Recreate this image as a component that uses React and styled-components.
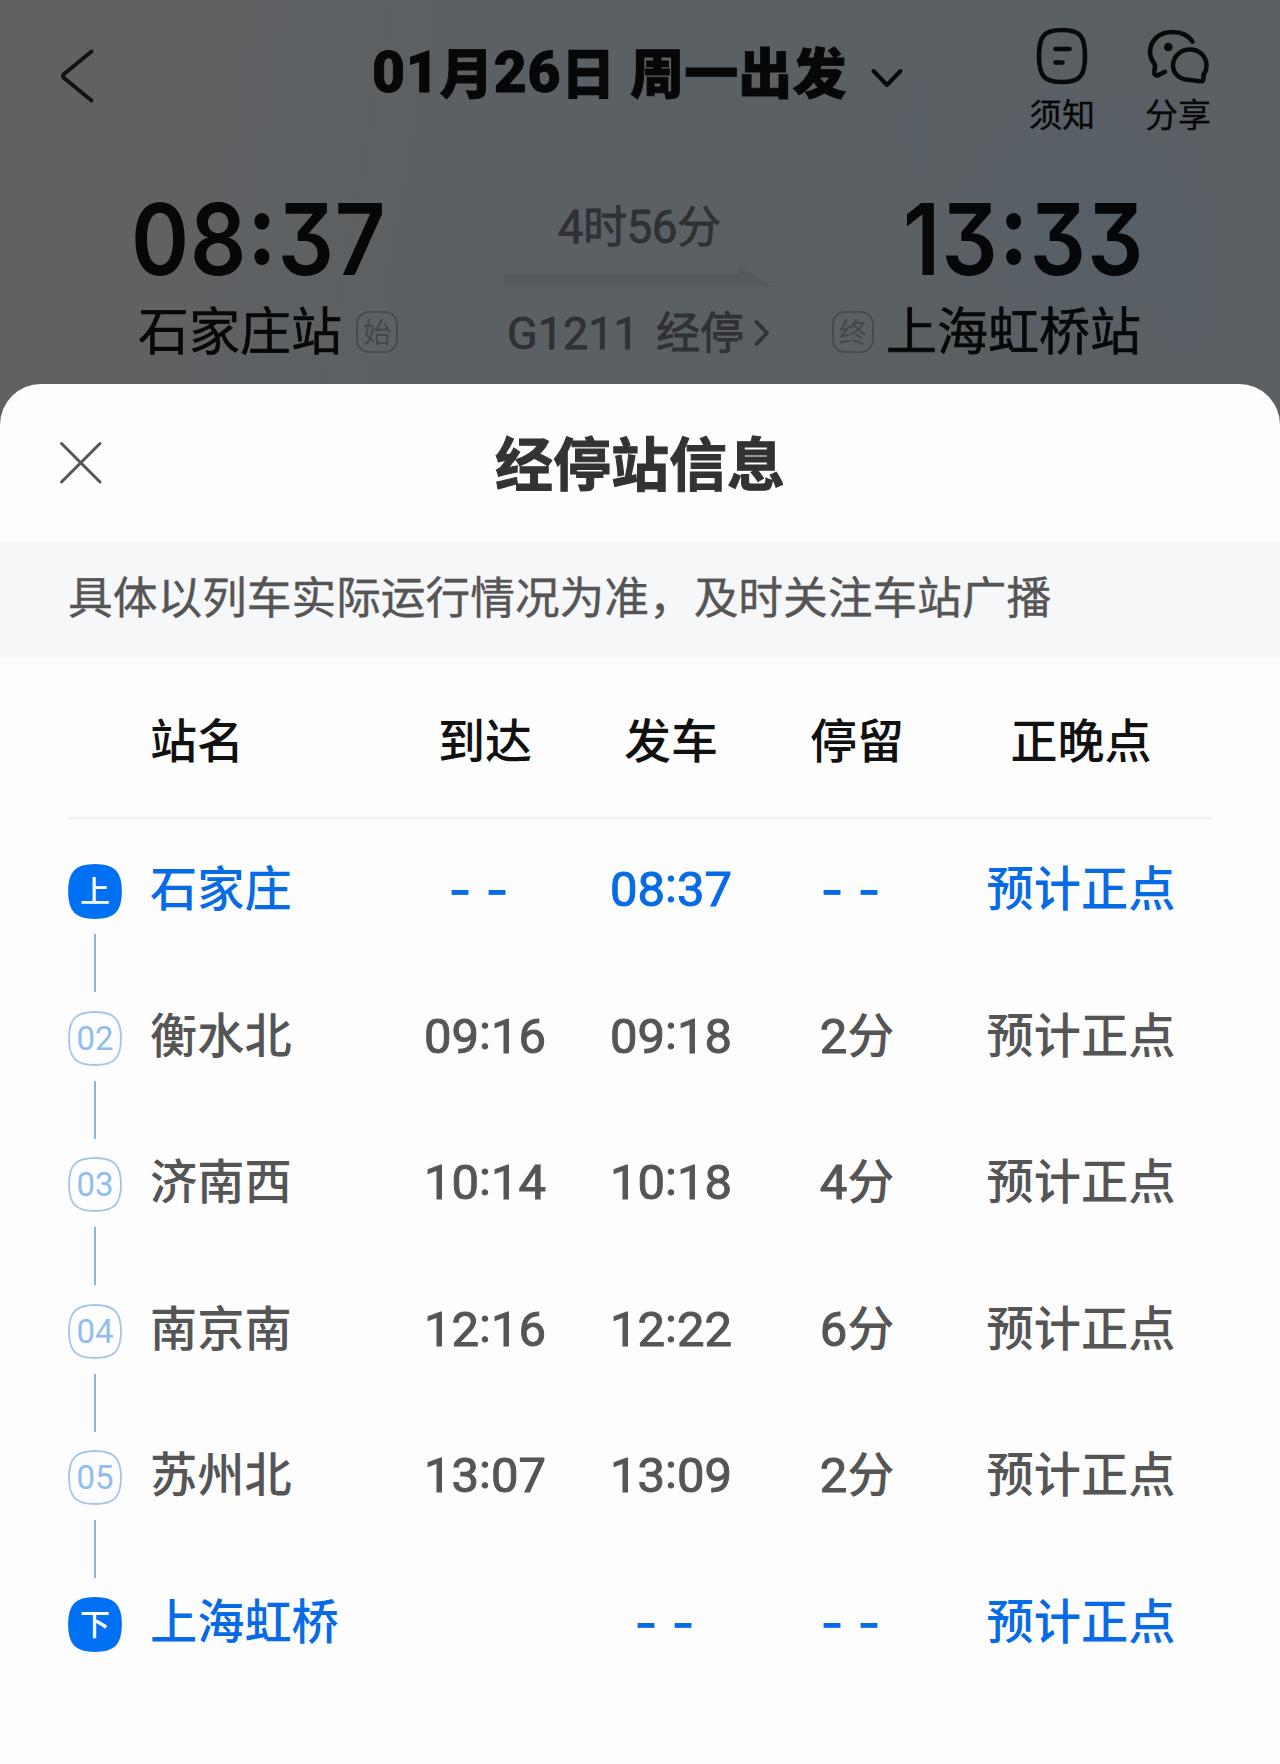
import React from "react";
import styled, { createGlobalStyle, css } from "styled-components";

const CJK = `"Noto Sans CJK SC", sans-serif`;

const GlobalStyle = createGlobalStyle`
  * { box-sizing: border-box; }
  body { margin: 0; background: #606162; font-family: ${CJK}; }
`;

const Screen = styled.div`
  width: 1280px;
  height: 1764px;
  overflow: hidden;
  display: flex;
  flex-direction: column;
`;

const Backdrop = styled.div`
  flex: none;
  height: 430px;
  color: #060708;
  background:
    radial-gradient(ellipse 30px 80px at 920px 130px, rgba(84, 94, 108, 0.45), transparent),
    radial-gradient(ellipse 60px 120px at 1190px 305px, rgba(84, 94, 108, 0.4), transparent),
    radial-gradient(ellipse 170px 160px at 1090px 210px, rgba(86, 95, 105, 0.65) 40%, transparent),
    linear-gradient(100deg, #616162 0%, #5f6163 16%, #5b6064 42%, #5a5f62 85%, #5d6063 100%);
`;

const TopBar = styled.div`
  height: 150px;
  display: grid;
  grid-template-columns: 372px 1fr 276px;
  align-items: start;
`;

const BackButton = styled.div`
  padding: 47px 0 0 58px;
`;

const DateTitle = styled.div`
  height: 150px;
  padding-top: 44px;
  display: flex;
  white-space: pre;
  font-size: 54px;
  font-weight: 900;
  line-height: 53px;
  letter-spacing: 0.2px;
  word-spacing: 2px;
  -webkit-text-stroke: 0.8px #060708;
  svg { margin: 22px 0 0 22px; flex: none; }
`;

const DateDigits = styled.span`
  font-family: Roboto, sans-serif;
  font-weight: 900;
  font-size: 57px;
  line-height: 57px;
  letter-spacing: 0.7px;
`;

const Actions = styled.div`
  display: flex;
  padding: 26px 0 0 0;
`;

const Action = styled.div`
  width: 116px;
  display: flex;
  flex-direction: column;
  align-items: center;
  font-size: 33px;
  line-height: 34px;
  font-weight: 400;
  gap: 10px;
  -webkit-text-stroke: 0.3px #060708;
`;

const Trip = styled.div`
  display: grid;
  grid-template-columns: 1fr 272px 1fr;
  padding: 38px 138px 0 136px;
`;

const Endpoint = styled.div`
  display: flex;
  flex-direction: column;
  align-items: ${(p) => (p.$end ? "flex-end" : "flex-start")};
`;

const BigTime = styled.div`
  height: 114px;
  margin: ${(p) => (p.$end ? "0 -3px 0 0" : "0 0 0 -5px")};
  font-family: Inter, sans-serif;
  font-feature-settings: "cv09", "case", "calt" 0;
  font-weight: 600;
  font-size: 99px;
  line-height: 103px;
  letter-spacing: ${(p) => (p.$end ? 1.5 : 1)}px;
  white-space: nowrap;
  transform: scaleX(0.89);
  transform-origin: ${(p) => (p.$end ? "right" : "left")} center;
`;

const BigColon = styled.span`
  font-weight: 700;
`;

const StationLine = styled.div`
  display: flex;
  align-items: center;
  gap: ${(p) => (p.$end ? 12 : 14)}px;
  height: 52px;
  margin: ${(p) => (p.$end ? "0 1px 0 0" : "0 0 0 2px")};
  font-size: 51px;
  line-height: 52px;
  white-space: nowrap;
  -webkit-text-stroke: 0.6px #060708;
`;

const Tag = styled.span`
  width: 42px;
  height: 42px;
  margin-top: 8px;
  border: 2px solid #484b4e;
  border-radius: 13px;
  color: #44474a;
  font-size: 28px;
  line-height: 36px;
  text-align: center;
  -webkit-text-stroke: 0;
`;

const Middle = styled.div`
  display: flex;
  flex-direction: column;
  align-items: center;
  color: #2f3134;
  -webkit-text-stroke: 0.8px #2f3134;
`;

const Duration = styled.div`
  height: 77px;
  padding-top: 14px;
  font-size: 44px;
  line-height: 44px;
  letter-spacing: -0.6px;
  white-space: nowrap;
`;

const TrainLine = styled.div`
  display: flex;
  align-items: baseline;
  margin-top: 19px;
  height: 50px;
  font-size: 44px;
  line-height: 48px;
  white-space: nowrap;
`;

const TrainNumber = styled.span`
  margin-right: 17px;
  font-family: Roboto, sans-serif;
  font-size: 45px;
  line-height: 48px;
`;

const MoreArrow = styled.svg`
  align-self: center;
  flex: none;
  margin: 4px 0 0 9px;
`;

const Digits = styled.span`
  font-family: Roboto, sans-serif;
  font-size: 46px;
  line-height: 1;
`;

const Sheet = styled.div`
  flex: 1;
  margin-top: -46px;
  background: #fdfdfd;
  border-radius: 41px 41px 0 0;
  z-index: 1;
`;

const SheetHeader = styled.div`
  height: 157px;
  display: grid;
  grid-template-columns: 160px 1fr 160px;
  align-items: center;
  svg { margin-left: 58px; }
`;

const SheetTitle = styled.div`
  padding-bottom: 3px;
  text-align: center;
  color: #333;
  font-size: 58px;
  line-height: 58px;
  font-weight: 700;
  -webkit-text-stroke: 1px #333;
`;

const Notice = styled.div`
  height: 116px;
  padding: 29px 0 0 68px;
  background: #f6f7f9;
  color: #555;
  font-size: 44.7px;
  line-height: 50px;
  white-space: nowrap;
  -webkit-text-stroke: 0.4px #555;
`;

const columns = css`
  display: grid;
  grid-template-columns: 82px 242px 186px 186px 186px 262px;
`;

const TableHead = styled.div`
  ${columns}
  margin: 0 68px;
  height: 162px;
  padding-top: 56px;
  border-bottom: 2px solid #f0f0f0;
  color: #111;
  font-size: 47px;
  line-height: 50px;
  font-weight: 500;
`;

const Cell = styled.div`
  text-align: ${(p) => (p.$left ? "left" : "center")};
  white-space: nowrap;
`;

const Rows = styled.div`
  padding: 45px 68px 0;
`;

const Row = styled.div`
  ${columns}
  height: 146.6px;
  color: ${(p) => (p.$active ? "#086be6" : "#555")};
  font-size: 47.2px;
  line-height: 44px;
  font-weight: 500;
`;

const Rail = styled.div`
  width: 54px;
  display: flex;
  flex-direction: column;
  align-items: center;
`;

const Badge = styled.div`
  position: relative;
  width: 54px;
  height: 55px;
  svg { display: block; }
`;

const BadgeText = styled.span`
  position: absolute;
  inset: 0;
  text-align: center;
  color: ${(p) => (p.$active ? "#fff" : "#8fbdf0")};
  font-family: ${(p) => (p.$active ? CJK : "Roboto, sans-serif")};
  font-weight: ${(p) => (p.$active ? 500 : 400)};
  font-size: ${(p) => (p.$active ? 30 : 33)}px;
  line-height: ${(p) => (p.$active ? 51 : 56)}px;
`;

const Connector = styled.div`
  width: 2px;
  height: 58px;
  margin-top: 15px;
  background: #8ab6de;
`;

const Time = styled.span`
  font-family: Roboto, sans-serif;
  font-size: 49px;
  font-weight: 400;
  line-height: 50px;
  -webkit-text-stroke: 1px currentColor;
`;

const Colon = styled.span`
  position: relative;
  top: -4px;
`;

const Dashes = styled.span`
  margin-right: 13px;
  font-family: Inter, sans-serif;
  font-size: 52px;
  line-height: 51px;
  word-spacing: -1px;
`;

const stops = [
  { mark: "上", name: "石家庄", arrive: "- -", depart: "08:37", stay: "- -", active: true },
  { mark: "02", name: "衡水北", arrive: "09:16", depart: "09:18", stay: "2分" },
  { mark: "03", name: "济南西", arrive: "10:14", depart: "10:18", stay: "4分" },
  { mark: "04", name: "南京南", arrive: "12:16", depart: "12:22", stay: "6分" },
  { mark: "05", name: "苏州北", arrive: "13:07", depart: "13:09", stay: "2分" },
  { mark: "下", name: "上海虹桥", arrive: "", depart: "- -", stay: "- -", active: true },
];

function Value({ text }) {
  if (!text) return null;
  if (text === "- -") return <Dashes>{text}</Dashes>;
  if (text.includes(":")) {
    const [h, m] = text.split(":");
    return <Time>{h}<Colon>:</Colon>{m}</Time>;
  }
  return <><Time>{text.slice(0, -1)}</Time>{text.slice(-1)}</>;
}

function StopBadge({ mark, active }) {
  return (
    <Badge>
      <svg width="54" height="55" viewBox="0 0 54 55">
        <path
          d="M27 1C46 1 53 8 53 27.5S46 54 27 54 1 47 1 27.5 8 1 27 1Z"
          fill={active ? "#0070f5" : "none"}
          stroke={active ? "#0070f5" : "#a4c5e8"}
          strokeWidth="1.8"
        />
      </svg>
      <BadgeText $active={active}>{mark}</BadgeText>
    </Badge>
  );
}

const NoticeIcon = () => (
  <svg width="56" height="60" viewBox="0 0 56 60" fill="none" stroke="#08090b" strokeWidth="4.6" strokeLinecap="round">
    <path d="M28 4C46 4 51 10 51 30S46 56 28 56 5 50 5 30 10 4 28 4Z" />
    <path d="M21.500 23H35.500M21.500 36.500H28.500" />
  </svg>
);

const ShareIcon = () => (
  <svg width="66" height="60" viewBox="0 0 66 60" fill="none" stroke="#08090b" strokeWidth="4.6" strokeLinecap="round" strokeLinejoin="round">
    <path d="M47.500 15.500C43 9 35.500 6 27.500 6C14 6 5 14.500 5 26C5 31 7 34.500 9.500 38C10.800 40 9.500 43 9.200 46C9 49 11 50 13.500 49L20 45.800" />
    <path d="M61.500 39.500C61.500 30.500 54.500 23.500 45 23.500S28 30.500 28 39.500S35.500 53.500 45 54C50 54.200 54 55.500 57.500 55.200C58.800 55 58.500 50 58.600 48.500C60.600 46 61.500 43 61.500 39.500Z" />
    <circle cx="23.300" cy="21" r="4.300" fill="#08090b" stroke="none" />
  </svg>
);

export default function App() {
  return (
    <>
      <GlobalStyle />
      <Screen>
        <Backdrop>
          <TopBar>
            <BackButton>
              <svg width="40" height="58" viewBox="0 0 40 58" fill="none" stroke="#111416" strokeWidth="4" strokeLinecap="round" strokeLinejoin="round">
                <path d="M33.500 4.500L6 27Q4 29 6 31L33.500 53.500" />
              </svg>
            </BackButton>
            <DateTitle>
              <DateDigits>01</DateDigits>月<DateDigits>26</DateDigits>日 周一出发
              <svg width="36" height="26" viewBox="0 0 36 26" fill="none" stroke="#08090b" strokeWidth="4" strokeLinecap="round" strokeLinejoin="round">
                <path d="M4.500 5L18 19L31.500 5" />
              </svg>
            </DateTitle>
            <Actions>
              <Action><NoticeIcon />须知</Action>
              <Action><ShareIcon />分享</Action>
            </Actions>
          </TopBar>
          <Trip>
            <Endpoint>
              <BigTime>08<BigColon>:</BigColon>37</BigTime>
              <StationLine>石家庄站<Tag>始</Tag></StationLine>
            </Endpoint>
            <Middle>
              <Duration><Digits>4</Digits>时<Digits>56</Digits>分</Duration>
              <svg width="272" height="22" viewBox="0 0 272 22">
                <path d="M1 9H235V0L270 22H1Z" fill="#55595d" stroke="none" />
              </svg>
              <TrainLine>
                <TrainNumber>G1211</TrainNumber>
                <span>经停</span>
                <MoreArrow width="18" height="30" viewBox="0 0 18 30" fill="none" stroke="#303235" strokeWidth="3.8" strokeLinecap="round" strokeLinejoin="round">
                  <path d="M3.500 4L14 15L3.500 26" />
                </MoreArrow>
              </TrainLine>
            </Middle>
            <Endpoint $end>
              <BigTime $end>13<BigColon>:</BigColon>33</BigTime>
              <StationLine $end><Tag>终</Tag>上海虹桥站</StationLine>
            </Endpoint>
          </Trip>
        </Backdrop>
        <Sheet>
          <SheetHeader>
            <svg width="46" height="46" viewBox="0 0 46 46" stroke="#555" strokeWidth="3" strokeLinecap="round">
              <path d="M3.500 3.500L42 42M42 3.500L3.500 42" />
            </svg>
            <SheetTitle>经停站信息</SheetTitle>
          </SheetHeader>
          <Notice>具体以列车实际运行情况为准，及时关注车站广播</Notice>
          <TableHead>
            <span />
            <Cell $left>站名</Cell>
            <Cell>到达</Cell>
            <Cell>发车</Cell>
            <Cell>停留</Cell>
            <Cell>正晚点</Cell>
          </TableHead>
          <Rows>
            {stops.map((s, i) => (
              <Row key={s.mark} $active={s.active}>
                <Rail>
                  <StopBadge mark={s.mark} active={s.active} />
                  {i < stops.length - 1 && <Connector />}
                </Rail>
                <Cell $left>{s.name}</Cell>
                <Cell><Value text={s.arrive} /></Cell>
                <Cell><Value text={s.depart} /></Cell>
                <Cell><Value text={s.stay} /></Cell>
                <Cell>预计正点</Cell>
              </Row>
            ))}
          </Rows>
        </Sheet>
      </Screen>
    </>
  );
}
